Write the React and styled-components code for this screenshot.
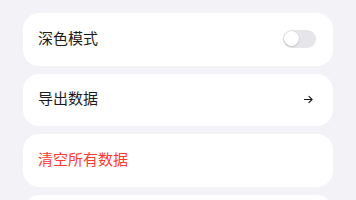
import React from "react";
import styled, { createGlobalStyle } from "styled-components";

const Global = createGlobalStyle`
  html, body { margin: 0; padding: 0; background: #f2f2f7; }
  body { font-family: "Noto Sans CJK SC", "Noto Sans", sans-serif; }
`;

const Page = styled.div`
  display: flex;
  flex-direction: column;
  gap: 8px;
  padding: 13px 23px 0 23px;
  width: 356px;
  height: 200px;
  box-sizing: border-box;
  overflow: hidden;
`;

const Card = styled.div`
  background: #ffffff;
  border-radius: 16px;
  display: flex;
  align-items: center;
  justify-content: space-between;
  padding: 0 16px 0 15px;
  height: 52.5px;
  flex-shrink: 0;
`;

const Label = styled.span`
  font-size: 15px;
  line-height: 20px;
  padding-bottom: 3px;
  color: ${(p) => (p.$danger ? "#ff3b30" : "#1c1c1e")};
`;

const Switch = styled.div`
  width: 33px;
  height: 18px;
  border-radius: 9px;
  background: #e5e5ea;
  display: flex;
  align-items: center;
  padding: 0 1px;
  box-sizing: border-box;
  margin-right: 1px;
  margin-bottom: 1px;
`;

const Knob = styled.div`
  width: 15px;
  height: 15px;
  border-radius: 50%;
  background: #ffffff;
  box-shadow: 0 0 0 0.5px rgba(0, 0, 0, 0.08), 0 1px 2px rgba(0, 0, 0, 0.12);
`;

const Arrow = styled.svg`
  width: 9px;
  height: 9px;
  margin-right: 4px;
  color: #1c1c1e;
`;

export default function App() {
  return (
    <>
      <Global />
      <Page>
        <Card>
          <Label>深色模式</Label>
          <Switch>
            <Knob />
          </Switch>
        </Card>
        <Card>
          <Label>导出数据</Label>
          <Arrow viewBox="0 0 10 10" fill="none">
            <path d="M0.5 5H9M5.5 1.5L9 5L5.5 8.5" stroke="currentColor" strokeWidth="1.2" strokeLinecap="round" strokeLinejoin="round" />
          </Arrow>
        </Card>
        <Card>
          <Label $danger>清空所有数据</Label>
        </Card>
        <Card>
          <Label></Label>
        </Card>
      </Page>
    </>
  );
}
